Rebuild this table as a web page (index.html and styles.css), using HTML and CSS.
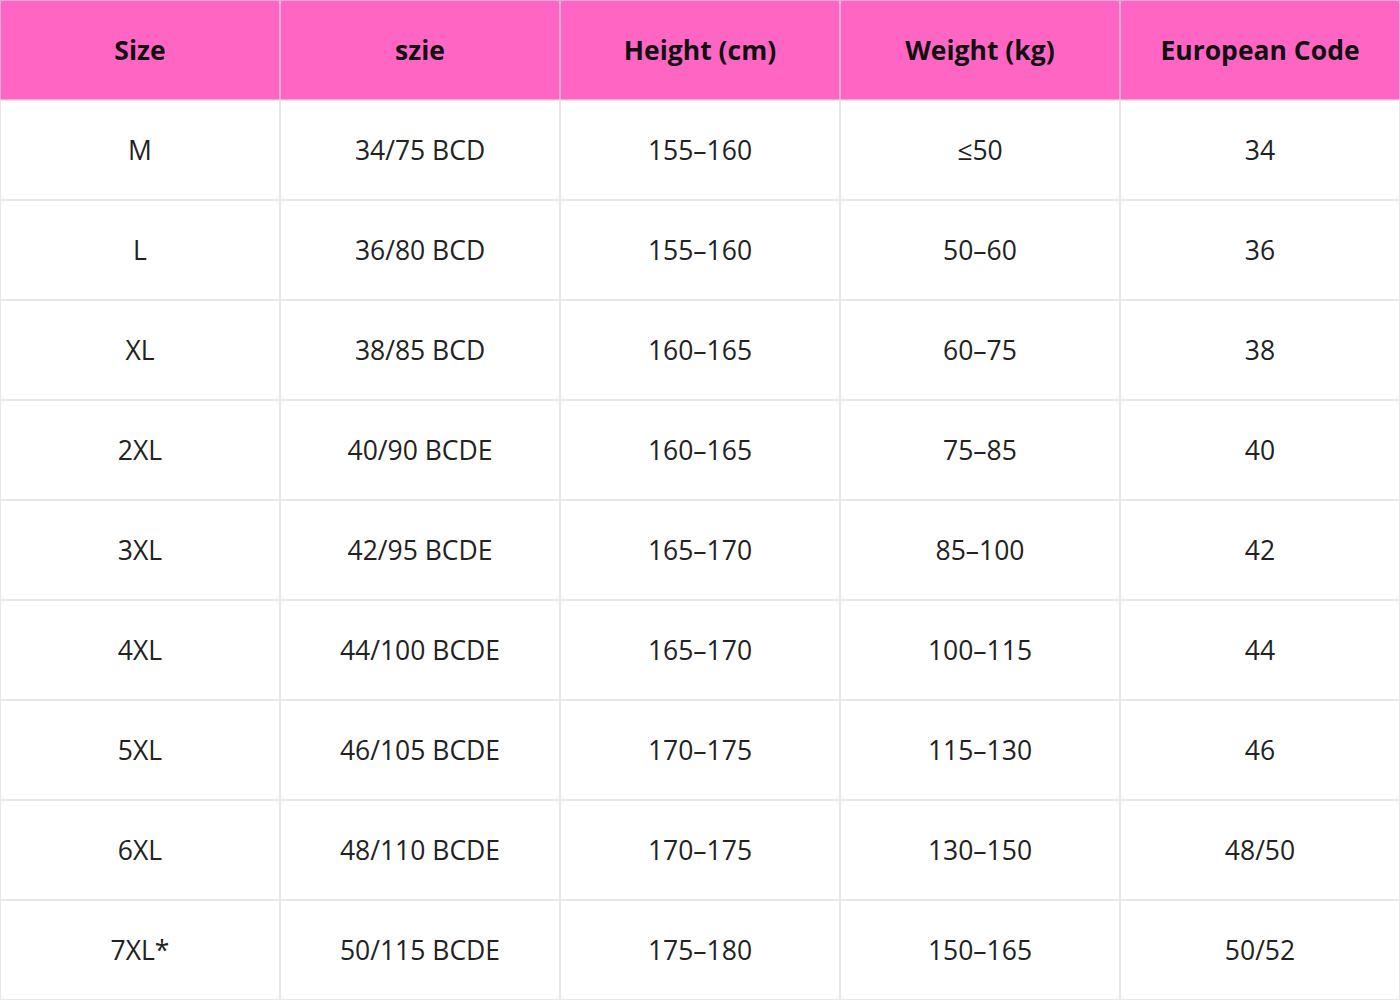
FILE: index.html
```html
<!DOCTYPE html>
<html>
<head>
<meta charset="utf-8">
<link rel="stylesheet" href="styles.css">
</head>
<body>
<table class="size-table">
  <thead>
    <tr><th>Size</th><th>szie</th><th>Height (cm)</th><th>Weight (kg)</th><th>European Code</th></tr>
  </thead>
  <tbody>
    <tr><td>M</td><td>34/75 BCD</td><td>155–160</td><td>≤50</td><td>34</td></tr>
    <tr><td>L</td><td>36/80 BCD</td><td>155–160</td><td>50–60</td><td>36</td></tr>
    <tr><td>XL</td><td>38/85 BCD</td><td>160–165</td><td>60–75</td><td>38</td></tr>
    <tr><td>2XL</td><td>40/90 BCDE</td><td>160–165</td><td>75–85</td><td>40</td></tr>
    <tr><td>3XL</td><td>42/95 BCDE</td><td>165–170</td><td>85–100</td><td>42</td></tr>
    <tr><td>4XL</td><td>44/100 BCDE</td><td>165–170</td><td>100–115</td><td>44</td></tr>
    <tr><td>5XL</td><td>46/105 BCDE</td><td>170–175</td><td>115–130</td><td>46</td></tr>
    <tr><td>6XL</td><td>48/110 BCDE</td><td>170–175</td><td>130–150</td><td>48/50</td></tr>
    <tr><td>7XL*</td><td>50/115 BCDE</td><td>175–180</td><td>150–165</td><td>50/52</td></tr>
  </tbody>
</table>
</body>
</html>
```
FILE: styles.css
```css
html, body {
  margin: 0;
  padding: 0;
  background: #ffffff;
}
.size-table {
  width: 1400px;
  border-collapse: separate;
  border-spacing: 0;
  table-layout: fixed;
  font-family: "Open Sans", "Liberation Sans", sans-serif;
}
.size-table th,
.size-table td {
  height: 100px;
  padding: 0;
  text-align: center;
  vertical-align: middle;
  box-sizing: border-box;
  font-size: 26.5px;
}
.size-table th {
  background: #ff66c4;
  border: 1px solid #f4acd8;
  color: #111111;
  font-weight: 700;
}
.size-table td {
  background: #ffffff;
  border: 1px solid #e8e8e8;
  color: #222222;
  font-weight: 400;
}
```
